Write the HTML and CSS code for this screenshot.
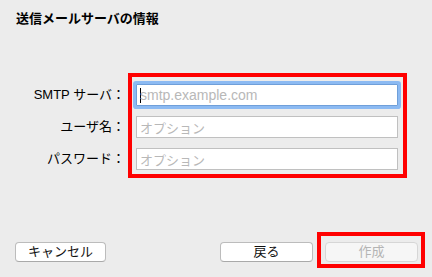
FILE: index.html
```html
<!DOCTYPE html>
<html>
  <head>
    <meta charset="utf-8" />
    <link rel="stylesheet" href="styles.css">
  </head>

  <body class="mail-setup-body">
    <div class="mail-setup-sheet">
      <div class="mail-setup-title">送信メールサーバの情報</div>

      <div class="mail-setup-form">
        <div class="mail-setup-labels">
          <span class="mail-setup-label">SMTP サーバ：</span>
          <span class="mail-setup-label">ユーザ名：</span>
          <span class="mail-setup-label">パスワード：</span>
        </div>

        <div class="mail-setup-highlight mail-setup-fields">
          <div class="mail-setup-field mail-setup-field-focused">
            <span class="mail-setup-caret"></span>
            <span class="mail-setup-placeholder mail-setup-placeholder-latin">smtp.example.com</span>
          </div>
          <div class="mail-setup-field">
            <span class="mail-setup-placeholder">オプション</span>
          </div>
          <div class="mail-setup-field">
            <span class="mail-setup-placeholder">オプション</span>
          </div>
        </div>
      </div>

      <div class="mail-setup-footer">
        <button class="mail-setup-button mail-setup-button-offset">キャンセル</button>

        <div class="mail-setup-footer-right">
          <button class="mail-setup-button mail-setup-button-offset">戻る</button>
          <div class="mail-setup-highlight mail-setup-create-wrap">
            <button class="mail-setup-button mail-setup-button-disabled" disabled>作成</button>
          </div>
        </div>
      </div>
    </div>
  </body>
</html>
```

FILE: styles.css
```css
:root {
  --bg: #ececec;
  --font: "Liberation Sans", "Noto Sans CJK JP", sans-serif;
  --highlight: #ff0000;
}

body {
  font-family: var(--font);
}

.mail-setup-body {
  margin: 0;
  width: 432px;
  height: 277px;
  overflow: hidden;
  background: var(--bg);
  color: #000;
}

.mail-setup-sheet {
  display: flex;
  flex-direction: column;
}

.mail-setup-title {
  padding: 11px 16px 0;
  font-size: 13px;
  line-height: 16px;
  font-weight: bold;
}

.mail-setup-form {
  display: flex;
  align-items: flex-start;
  margin-top: 46px;
}

.mail-setup-labels {
  display: flex;
  flex-direction: column;
  gap: 10px;
  width: 125px;
  padding-top: 11px;
  padding-right: 3px;
}

.mail-setup-label {
  height: 22px;
  line-height: 22px;
  font-size: 13px;
  text-align: right;
  white-space: nowrap;
}

.mail-setup-highlight {
  border: 4px solid var(--highlight);
}

.mail-setup-fields {
  display: flex;
  flex-direction: column;
  gap: 10px;
  width: 262px;
  padding: 7px 5px 4px 4px;
}

.mail-setup-field {
  display: flex;
  align-items: center;
  box-sizing: border-box;
  height: 22px;
  padding: 0 3px;
  background: #fff;
  border: 1px solid #c0c0c0;
}

.mail-setup-field-focused {
  border-color: #6f9fd9;
  box-shadow: 0 0 0 3px #8cbaf2;
  border-radius: 1px;
}

.mail-setup-caret {
  width: 1px;
  height: 15px;
  margin-right: -1px;
  background: #000;
}

.mail-setup-placeholder {
  font-size: 13px;
  color: #b8b8b8;
  white-space: nowrap;
}

.mail-setup-placeholder-latin {
  font-size: 14px;
}

.mail-setup-footer {
  display: flex;
  justify-content: space-between;
  align-items: flex-start;
  margin-top: 54px;
  padding-left: 15px;
  padding-right: 7px;
}

.mail-setup-footer-right {
  display: flex;
  align-items: flex-start;
  gap: 4px;
}

.mail-setup-create-wrap {
  display: flex;
  padding: 6px 3px 2px 4px;
}

.mail-setup-button {
  box-sizing: border-box;
  height: 20px;
  width: 93px;
  margin: 0;
  padding: 0;
  font-family: var(--font);
  font-size: 13px;
  line-height: 18px;
  color: #111;
  background: #fff;
  border: 1px solid #bcbcbc;
  border-bottom-color: #a9a9a9;
  border-radius: 4px;
}

.mail-setup-button-offset {
  margin-top: 10px;
}

.mail-setup-footer > .mail-setup-button {
  width: 91px;
}

.mail-setup-button-disabled {
  color: #b4b4b4;
  background: #f6f6f6;
  border-color: #d6d6d6;
}
```
